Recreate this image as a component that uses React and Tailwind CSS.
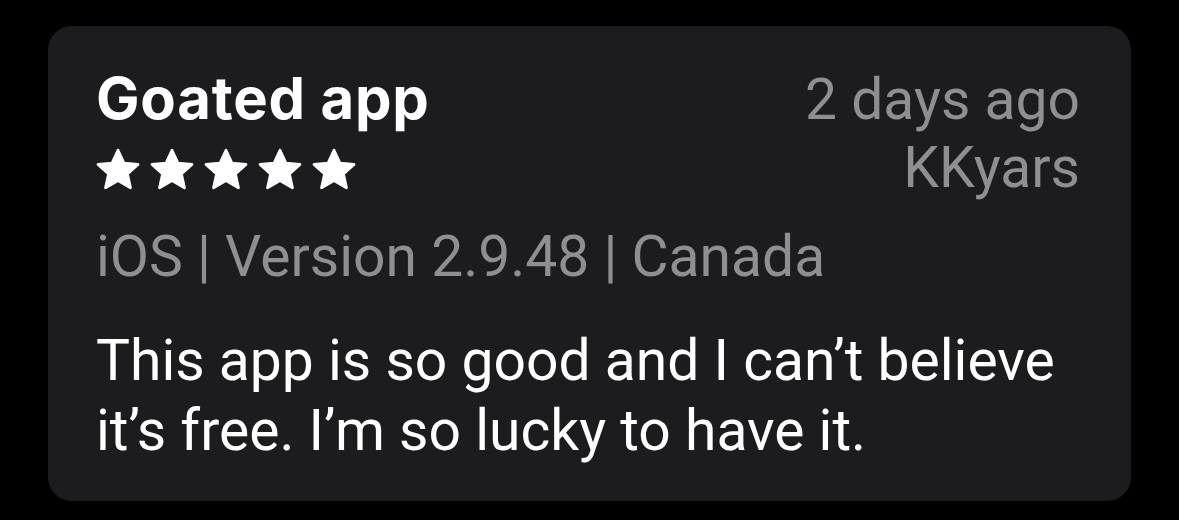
import React from "react";

function Star() {
  return (
    <svg viewBox="1.2 1.4 21.6 20" className="w-[44px] h-[42px]" fill="#ffffff">
      <path
        d="M12 2.2l2.9 6.3 6.9.7-5.2 4.6 1.5 6.8L12 17.1l-6.1 3.5 1.5-6.8-5.2-4.6 6.9-.7z"
        stroke="#ffffff"
        strokeWidth="1.4"
        strokeLinejoin="round"
      />
    </svg>
  );
}

export default function App() {
  const font = { fontFamily: "Roboto, 'Noto Sans', sans-serif" };
  return (
    <div className="w-[1179px] h-[520px] bg-black pt-[26px] px-[48px]" style={font}>
      <div className="h-[475px] rounded-[24px] bg-[#1c1c1e] pt-[40px] pl-[48px] pr-[51px]">
        <div className="flex justify-between items-start">
          <div>
            <div className="font-['Inter',sans-serif] text-[58px] leading-[64px] font-bold tracking-[0.8px] text-white whitespace-nowrap">
              Goated app
            </div>
            <div className="flex gap-[10px] mt-[18px]">
              <Star />
              <Star />
              <Star />
              <Star />
              <Star />
            </div>
          </div>
          <div className="text-right text-[57px] leading-[68px] text-[#8e8e93]">
            <div>2 days ago</div>
            <div>KKyars</div>
          </div>
        </div>
        <div className="mt-[21px] text-[57px] leading-[68px] text-[#8e8e93] whitespace-nowrap">iOS | Version 2.9.48 | Canada</div>
        <div className="mt-[35px] text-[57px] leading-[70px] text-white whitespace-nowrap">
          <div>This app is so good and I can’t believe</div>
          <div>it’s free. I’m so lucky to have it.</div>
        </div>
      </div>
    </div>
  );
}
